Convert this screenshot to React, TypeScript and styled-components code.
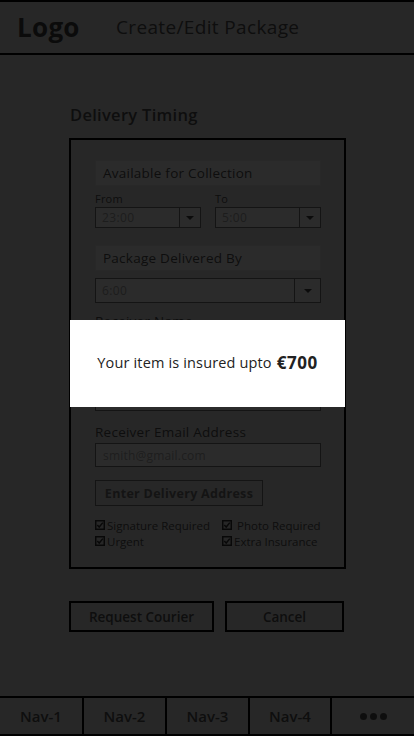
import React from "react";
import styled, { createGlobalStyle } from "styled-components";

const Global = createGlobalStyle`
  html, body { margin: 0; padding: 0; }
  body { font-family: "Open Sans", "Liberation Sans", sans-serif; background: #e6e6e6; }
  * { box-sizing: border-box; }
`;

const Page = styled.div`
  position: relative;
  width: 414px;
  height: 736px;
  display: flex;
  flex-direction: column;
  background: #e6e6e6;
  color: #555;
  overflow: hidden;
`;

const Header = styled.header`
  height: 55px;
  flex: none;
  display: flex;
  align-items: center;
  border-top: 2px solid #000;
  border-bottom: 2px solid #000;
  padding: 0 0 2px 17px;
`;

const Logo = styled.div`
  font-size: 26px;
  font-weight: 700;
  color: #444;
  width: 99px;
  letter-spacing: 0.3px;
`;

const Title = styled.div`
  font-size: 19px;
  letter-spacing: 0.35px;
  color: #555;
`;

const Main = styled.main`
  flex: 1;
  padding: 50px 68px 0 69px;
  display: flex;
  flex-direction: column;
`;

const SectionTitle = styled.h2`
  margin: 0 0 13px 1px;
  font-size: 16.5px;
  line-height: 20px;
  letter-spacing: 0.3px;
  font-weight: 600;
  color: #555;
`;

const Card = styled.section`
  border: 2px solid #000;
  padding: 20px 23px 18px 24px;
  display: flex;
  flex-direction: column;
`;

const LabelBox = styled.div<{ $mt?: number }>`
  height: 26px;
  margin-top: ${(p) => p.$mt ?? 0}px;
  background: #fff;
  border: 1px solid #eee;
  display: flex;
  align-items: center;
  padding-left: 7px;
  font-size: 13.5px;
  letter-spacing: 0.25px;
`;

const TwoCols = styled.div`
  display: grid;
  grid-template-columns: 1fr 1fr;
  column-gap: 14px;
  margin-top: 6px;
`;

const Field = styled.div`
  display: flex;
  flex-direction: column;
`;

const SmallLabel = styled.div`
  font-size: 11px;
  line-height: 14px;
  margin-bottom: 1px;
  letter-spacing: 0.2px;
`;

const Select = styled.div<{ $h: number }>`
  height: ${(p) => p.$h}px;
  border: 1px solid #777;
  display: flex;
  align-items: stretch;
  background: #fff;
`;

const SelectValue = styled.div`
  flex: 1;
  display: flex;
  align-items: center;
  padding-left: 6px;
  font-size: 12px;
  letter-spacing: 0.4px;
  color: #aaa;
`;

const SelectArrow = styled.div<{ $w: number }>`
  width: ${(p) => p.$w}px;
  border-left: 1px solid #777;
  display: flex;
  align-items: center;
  justify-content: center;
  &::after {
    content: "";
    border-left: 4px solid transparent;
    border-right: 4px solid transparent;
    border-top: 4px solid #444;
  }
`;

const FieldLabel = styled.div<{ $mt: number }>`
  margin-top: ${(p) => p.$mt}px;
  font-size: 13.5px;
  letter-spacing: 0.25px;
  line-height: 16px;
  margin-bottom: 3px;
`;

const Input = styled.div<{ $mt?: number }>`
  height: 24px;
  margin-top: ${(p) => p.$mt ?? 0}px;
  border: 1px solid #777;
  background: #fff;
  display: flex;
  align-items: center;
  padding-left: 7px;
  font-size: 12px;
  letter-spacing: 0.2px;
  color: #b0b0b0;
`;

const OutlineButton = styled.div`
  align-self: flex-start;
  margin-top: 13px;
  width: 168px;
  height: 26px;
  border: 1px solid #777;
  display: flex;
  align-items: center;
  justify-content: center;
  font-size: 12.5px;
  letter-spacing: 0.3px;
  font-weight: 700;
  color: #777;
`;

const Checks = styled.div`
  display: grid;
  grid-template-columns: 127px 1fr;
  margin-top: 11px;
`;

const Check = styled.div`
  display: flex;
  align-items: center;
  gap: 2px;
  height: 16px;
  font-size: 11.5px;
`;

const Actions = styled.div`
  display: flex;
  gap: 11px;
  margin-top: 32px;
`;

const ActionButton = styled.div<{ $w: number }>`
  width: ${(p) => p.$w}px;
  height: 31px;
  border: 2px solid #000;
  display: flex;
  align-items: center;
  justify-content: center;
  font-size: 13.5px;
  font-weight: 600;
  color: #555;
`;

const Nav = styled.nav`
  flex: none;
  height: 40px;
  border-top: 2px solid #000;
  border-bottom: 2px solid #000;
  display: grid;
  grid-template-columns: 84px 83px 83px 82px 1fr;
`;

const NavItem = styled.div<{ $last?: boolean }>`
  display: flex;
  align-items: center;
  justify-content: center;
  font-size: 15px;
  font-weight: 600;
  color: #555;
  border-right: ${(p) => (p.$last ? "none" : "2px solid #000")};
`;

const Dots = styled.div`
  display: flex;
  gap: 3px;
  span {
    width: 7px;
    height: 7px;
    border-radius: 50%;
    background: #555;
  }
`;

const Overlay = styled.div`
  position: absolute;
  inset: 0;
  background: rgba(0, 0, 0, 0.83);
`;

const Modal = styled.div`
  position: absolute;
  left: 70px;
  top: 320px;
  width: 275px;
  height: 87px;
  background: #fff;
  display: flex;
  align-items: center;
  justify-content: center;
  font-size: 14.5px;
  letter-spacing: 0.15px;
  color: #222;
  padding-bottom: 3px;
  b {
    font-size: 17px;
    font-weight: 700;
    letter-spacing: 0.5px;
    margin-left: 5px;
  }
`;

const CheckIcon = () => (
  <svg width="10" height="10" viewBox="0 0 10 10">
    <rect x="0.75" y="0.75" width="8.5" height="8.5" fill="none" stroke="#333" strokeWidth="1.5" />
    <path d="M2.3 5 L4.2 7 L7.8 2.6" fill="none" stroke="#333" strokeWidth="1.5" />
  </svg>
);

export default function App() {
  return (
    <>
      <Global />
      <Page>
        <Header>
          <Logo>Logo</Logo>
          <Title>Create/Edit Package</Title>
        </Header>
        <Main>
          <SectionTitle>Delivery Timing</SectionTitle>
          <Card>
            <LabelBox>Available for Collection</LabelBox>
            <TwoCols>
              <Field>
                <SmallLabel>From</SmallLabel>
                <Select $h={21}>
                  <SelectValue>23:00</SelectValue>
                  <SelectArrow $w={21} />
                </Select>
              </Field>
              <Field>
                <SmallLabel>To</SmallLabel>
                <Select $h={21}>
                  <SelectValue>5:00</SelectValue>
                  <SelectArrow $w={21} />
                </Select>
              </Field>
            </TwoCols>
            <LabelBox $mt={17}>Package Delivered By</LabelBox>
            <div style={{ height: 7 }} />
            <Select $h={25}>
              <SelectValue>6:00</SelectValue>
              <SelectArrow $w={26} />
            </Select>
            <FieldLabel $mt={10}>Receiver Name</FieldLabel>
            <Input />
            <Input $mt={31} />
            <FieldLabel $mt={13}>Receiver Email Address</FieldLabel>
            <Input>smith@gmail.com</Input>
            <OutlineButton>Enter Delivery Address</OutlineButton>
            <Checks>
              <Check><CheckIcon />Signature Required</Check>
              <Check><CheckIcon />&nbsp;Photo Required</Check>
              <Check><CheckIcon />Urgent</Check>
              <Check><CheckIcon />Extra Insurance</Check>
            </Checks>
          </Card>
          <Actions>
            <ActionButton $w={145}>Request Courier</ActionButton>
            <ActionButton $w={119}>Cancel</ActionButton>
          </Actions>
        </Main>
        <Nav>
          <NavItem>Nav-1</NavItem>
          <NavItem>Nav-2</NavItem>
          <NavItem>Nav-3</NavItem>
          <NavItem>Nav-4</NavItem>
          <NavItem $last>
            <Dots><span /><span /><span /></Dots>
          </NavItem>
        </Nav>
        <Overlay />
        <Modal>
          Your item is insured upto<b>€700</b>
        </Modal>
      </Page>
    </>
  );
}
